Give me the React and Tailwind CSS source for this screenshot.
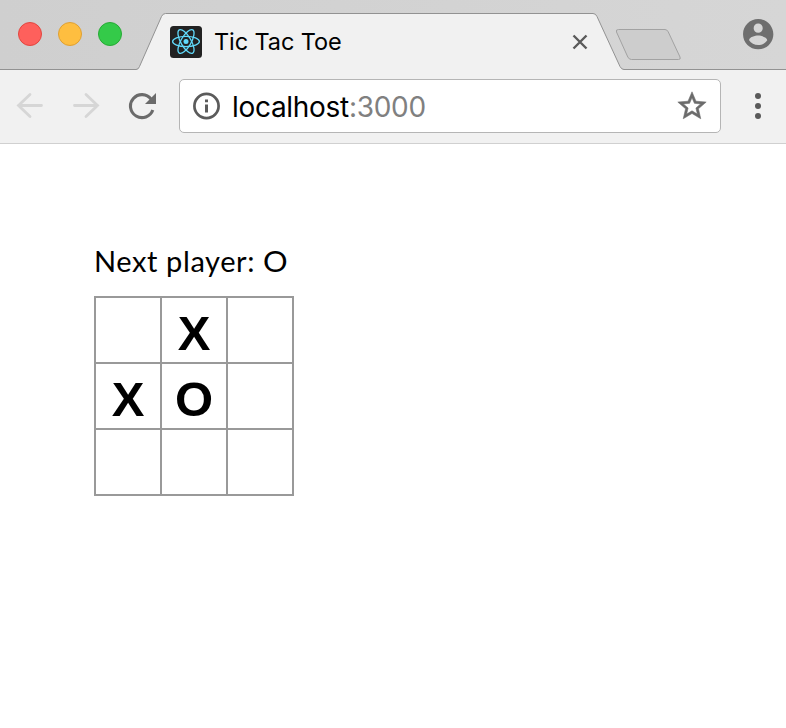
const squares = [null, 'X', null, 'X', 'O', null, null, null, null];

function ReactLogo() {
  return (
    <svg className="h-8 w-8 shrink-0" viewBox="0 0 32 32" fill="none">
      <rect width="32" height="32" rx="3.5" fill="#222" />
      <g stroke="#61dafb" strokeWidth="1.3">
        <ellipse cx="16" cy="15.5" rx="13.4" ry="5.1" />
        <ellipse cx="16" cy="15.5" rx="13.4" ry="5.1" transform="rotate(60 16 15.5)" />
        <ellipse cx="16" cy="15.5" rx="13.4" ry="5.1" transform="rotate(120 16 15.5)" />
      </g>
      <circle cx="16" cy="15.5" r="2.5" fill="#61dafb" />
    </svg>
  );
}

function TabBar() {
  return (
    <div className="flex h-[70px] bg-linear-to-r from-[#cfcfcf] to-[#d6d6d6] shadow-[inset_0_-1px_0_#929292]">
      <div className="flex w-[138px] gap-4 pl-[18px] pt-[22px]">
        <span className="h-6 w-6 rounded-full border border-[#e2463f] bg-[#fe605c]" />
        <span className="h-6 w-6 rounded-full border border-[#dfa033] bg-[#febe40]" />
        <span className="h-6 w-6 rounded-full border border-[#27aa35] bg-[#34ca49]" />
      </div>
      <div className="relative flex w-[484px] pl-8 pt-[26px]">
        <svg className="absolute -left-1 top-0 h-[70px] w-[492px]" viewBox="0 0 492 70" fill="none">
          <path
            d="M2 70 V69.5 Q4.5 69.5 5.5 66.5 L27.5 16.5 Q28.8 13.5 31.5 13.5 H459 Q461.7 13.5 463 16.5 L486 66.5 Q487.5 69.5 490 69.5 V70 Z"
            fill="#f1f1f1"
          />
          <path
            d="M0 69.5 H2 Q4.5 69.5 5.5 66.5 L27.5 16.5 Q28.8 13.5 31.5 13.5 H459 Q461.7 13.5 463 16.5 L486 66.5 Q487.5 69.5 490 69.5 H492"
            stroke="#929292"
          />
        </svg>
        <div className="relative flex h-8 w-[420px] items-center">
          <ReactLogo />
          <span className="ml-3 flex-1 whitespace-nowrap font-['Inter',sans-serif] text-[23.5px] leading-8 tracking-[-0.1px] text-black">
            Tic Tac Toe
          </span>
          <svg className="mr-[2px] h-4 w-4" viewBox="0 0 16 16" fill="none" stroke="#5a5a5a" strokeWidth="2.4">
            <path d="M1.5 1.5 L14.5 14.5 M14.5 1.5 L1.5 14.5" />
          </svg>
        </div>
      </div>
      <svg className="-ml-[8px] mt-[27px] h-[35px] w-[70px]" viewBox="0 0 70 35" fill="none">
        <path
          d="M4.5 2.5 H51 Q53 2.5 54.2 4.8 L66 30 Q67 32.5 64.5 32.5 H17.5 Q15 32.5 13.8 30 L2.5 5 Q1.5 2.5 4.5 2.5 Z"
          fill="#cdcdcd"
          stroke="#a2a2a2"
        />
      </svg>
      <svg className="ml-[55.8px] mt-[15.8px] h-[36.4px] w-[36.4px]" viewBox="0 0 24 24" fill="#6e6e6e">
        <path d="M12 2C6.480 2 2 6.480 2 12s4.480 10 10 10 10-4.480 10-10S17.520 2 12 2zm0 3c1.660 0 3 1.340 3 3s-1.340 3-3 3-3-1.340-3-3 1.340-3 3-3zm0 14.200c-2.500 0-4.710-1.280-6-3.220.030-1.990 4-3.080 6-3.080 1.990 0 5.970 1.090 6 3.080-1.290 1.940-3.500 3.220-6 3.220z" />
      </svg>
    </div>
  );
}

function Toolbar() {
  return (
    <div className="flex h-[74px] items-start border-b border-[#d0d0d0] bg-[#f1f1f1] pt-[9px]">
      <svg className="ml-4 mt-[13px] h-7 w-7" viewBox="0 0 28 28" fill="none" stroke="#d6d6d6" strokeWidth="2.8" strokeLinecap="round">
        <path d="M25.5 13.5 H2.5 M14 2.5 L2.5 13.5 L14 24.5" />
      </svg>
      <svg className="ml-7 mt-[13px] h-7 w-7" viewBox="0 0 28 28" fill="none" stroke="#d6d6d6" strokeWidth="2.8" strokeLinecap="round">
        <path d="M2.5 13.5 H25.5 M14 2.5 L25.5 13.5 L14 24.5" />
      </svg>
      <svg className="ml-7 mt-[13px] h-7 w-7" viewBox="0 0 28 28" fill="none">
        <path d="M23.1 7.1 A11.5 11.5 0 1 0 24.8 18" stroke="#6b6b6b" strokeWidth="3.1" />
        <path d="M28 1 V12 H17 Z" fill="#6b6b6b" />
      </svg>
      <div className="ml-[23px] flex h-[54px] w-[542px] items-center rounded-[5px] border border-[#b5b5b5] bg-white pl-[13px] pr-[11px]">
        <svg className="h-7 w-7 shrink-0" viewBox="0 0 28 28" fill="none">
          <circle cx="13.5" cy="14" r="12.1" stroke="#5b5b5b" strokeWidth="2.7" />
          <path d="M12 12.5 H15 V20.5 H12 Z M12 7.5 H15 V10.3 H12 Z" fill="#5b5b5b" />
        </svg>
        <span className="ml-[11px] flex-1 whitespace-nowrap pt-px font-['Inter',sans-serif] text-[28px] leading-[54px] tracking-[-0.3px] text-black">
          localhost<span className="text-[#808080]">:3000</span>
        </span>
        <svg className="h-[34px] w-[34px] shrink-0" viewBox="0 0 24 24" fill="#6b6b6b" stroke="#6b6b6b" strokeWidth="0.4">
          <path d="M22 9.240l-7.190-.620L12 2 9.190 8.630 2 9.240l5.460 4.730L5.820 21 12 17.270 18.180 21l-1.630-7.030L22 9.240zM12 15.400l-3.760 2.270 1-4.280-3.320-2.880 4.380-.380L12 6.100l1.710 4.040 4.380.380-3.320 2.880 1 4.280L12 15.400z" />
        </svg>
      </div>
      <div className="ml-[34px] mt-[14px] flex flex-col gap-1">
        <span className="h-[6px] w-[6px] rounded-full bg-[#5a5a5a]" />
        <span className="h-[6px] w-[6px] rounded-full bg-[#5a5a5a]" />
        <span className="h-[6px] w-[6px] rounded-full bg-[#5a5a5a]" />
      </div>
    </div>
  );
}

export default function App() {
  return (
    <div className="h-[728px] w-[786px] overflow-hidden bg-white">
      <TabBar />
      <Toolbar />
      <main className="pl-[94px] pt-[97px]">
        <div className="h-[55px] whitespace-nowrap font-['Lato',sans-serif] text-[29px] leading-10 tracking-[0.6px] text-black">
          Next player: <span className="inline-block origin-left scale-x-[1.06]">O</span>
        </div>
        <div className="grid w-[200px] grid-cols-[repeat(3,66px)] border-l-2 border-t-2 border-[#999]">
          {squares.map((mark, i) => (
            <div
              key={i}
              className="h-[66px] border-b-2 border-r-2 border-[#999] pt-[2px] text-center font-['Liberation_Sans',Arial,sans-serif] text-[49px] font-bold leading-[66px] text-black"
            >
              {mark}
            </div>
          ))}
        </div>
      </main>
    </div>
  );
}
